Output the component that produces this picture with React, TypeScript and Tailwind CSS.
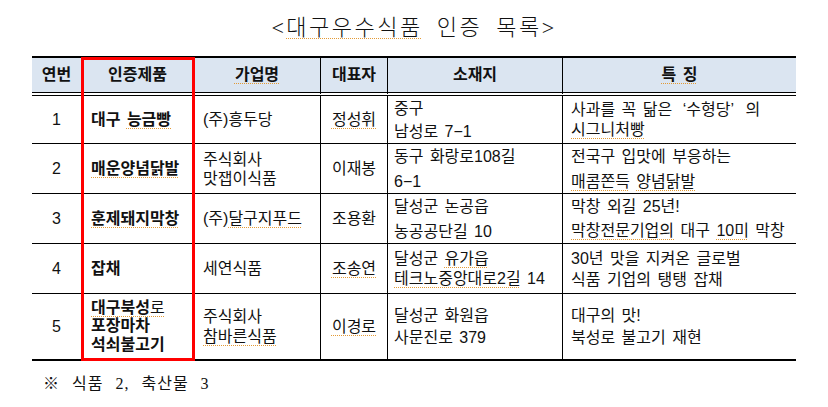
import React from 'react';

const SANS = "font-['Liberation_Sans','Noto_Sans_CJK_KR',sans-serif]";
const SERIF = "font-['Liberation_Serif','Noto_Sans_CJK_KR',serif]";

// dotted orange spell-check underline, as in the source document
const U = ({ children }: { children: React.ReactNode }) => (
  <span className="underline decoration-dotted decoration-[#e39a35] decoration-1 underline-offset-[3px]">
    {children}
  </span>
);

const Lines = ({ lines, lead }: { lines: React.ReactNode[]; lead: string }) => (
  <div className={lead}>
    {lines.map((l, i) => (
      <div key={i}>{l}</div>
    ))}
  </div>
);

const headers = ['연번', '인증제품', <U key="g">가업명</U>, '대표자', '소재지', <U key="t">특 징</U>];

// per-column alignment / padding / right rule
const colClass = [
  'justify-center',
  'pl-[10px] font-bold',
  'pl-[9px] border-r border-black',
  'justify-center border-r border-black',
  'pl-[6px] border-r border-black',
  'pl-2',
];

const rows: { h: string; cells: React.ReactNode[] }[] = [
  {
    h: 'h-[48px] border-b',
    cells: [
      '1',
      <>대구&nbsp;<U>능금빵</U></>,
      '(주)흥두당',
      <U>정성휘</U>,
      <Lines lead="leading-[23px]" lines={['중구', '남성로 7−1']} />,
      <Lines
        lead="leading-[20px]"
        lines={[
          <>
            사과를 꼭 닮은 <span className="pl-[4px]">‘</span>수형당<span className="pr-[5px]">’</span> 의
          </>,
          <U>시그니처빵</U>,
        ]}
      />,
    ],
  },
  {
    h: 'h-[50px] border-b',
    cells: [
      '2',
      <U>매운양념닭발</U>,
      <Lines lead="leading-[19px]" lines={['주식회사', '맛잽이식품']} />,
      '이재봉',
      <Lines lead="leading-[25px]" lines={['동구 화랑로108길', '6−1']} />,
      <Lines lead="leading-[25px]" lines={['전국구 입맛에 부응하는', <><U>매콤쫀득</U> <U>양념닭발</U></>]} />,
    ],
  },
  {
    h: 'h-[50px] border-b',
    cells: [
      '3',
      <U>훈제돼지막창</U>,
      <>(주)<U>달구지푸드</U></>,
      '조용환',
      <Lines lead="leading-[25px]" lines={['달성군 논공읍', '농공공단길 10']} />,
      <Lines
        lead="leading-[24px]"
        lines={['막창 외길 25년!', <><U>막창전문기업의</U> 대구 <U>10미</U> 막창</>]}
      />,
    ],
  },
  {
    h: 'h-[50px] border-b',
    cells: [
      '4',
      '잡채',
      '세연식품',
      <U>조송연</U>,
      <Lines lead="leading-[20px]" lines={[<>달성군 <U>유가읍</U></>, <><U>테크노중앙대로2길</U> 14</>]} />,
      <Lines lead="leading-[21px]" lines={['30년 맛을 지켜온 글로벌', '식품 기업의 탱탱 잡채']} />,
    ],
  },
  {
    h: 'h-[67px] border-b-2',
    cells: [
      '5',
      <Lines
        lead="leading-[18.5px]"
        lines={[<U>대구북성<span className="font-normal">로</span></U>, '포장마차', '석쇠불고기']}
      />,
      <Lines lead="leading-[20px]" lines={['주식회사', <U>참바른식품</U>]} />,
      <U>이경로</U>,
      <Lines lead="leading-[22px]" lines={['달성군 화원읍', '사문진로 379']} />,
      <Lines lead="leading-[22px]" lines={['대구의 맛!', '북성로 불고기 재현']} />,
    ],
  },
];

export default function App() {
  return (
    <div className={`w-[828px] h-[407px] bg-white overflow-hidden text-[#111] ${SANS}`}>
      <h1
        className={`pt-[13px] h-[43px] text-center text-[22px] leading-[30px] font-light tracking-[2.5px] [word-spacing:6px] ${SERIF}`}
      >
        &lt;<U>대구우수식품</U> 인증 목록&gt;
      </h1>

      <div className="relative ml-[32px] mt-[13px] w-[764px] border-t-2 border-black grid grid-cols-[49px_113px_127px_67px_175px_233px] text-[16px] [word-spacing:2px]">
        {headers.map((h, i) => (
          <div
            key={i}
            className={`h-[38px] flex items-center justify-center bg-[#dbe5f1] bg-clip-padding border-b-4 border-double border-black font-bold ${
              i >= 2 && i <= 4 ? 'border-r' : ''
            }`}
          >
            {h}
          </div>
        ))}

        {rows.map((r, ri) =>
          r.cells.map((c, ci) => (
            <div key={`${ri}-${ci}`} className={`${r.h} border-black flex items-center whitespace-nowrap ${colClass[ci]}`}>
              {c}
            </div>
          ))
        )}

        {/* red highlight box around the product column */}
        <div className="absolute left-[49px] top-[-1px] w-[114px] h-[304px] border-[3px] border-[#ff0000] pointer-events-none" />
      </div>

      <p className={`mt-[13px] ml-[43px] text-[16px] leading-[20px] tracking-[1px] [word-spacing:7px] ${SERIF}`}>
        ※ 식품 2, 축산물 3
      </p>
    </div>
  );
}
